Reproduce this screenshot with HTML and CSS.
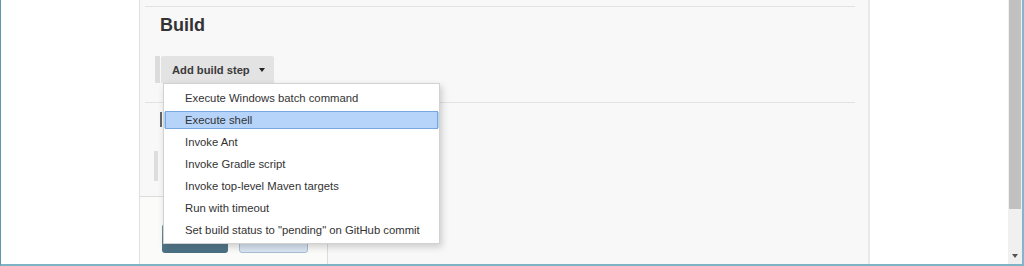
FILE: index.html
```html
<!DOCTYPE html>
<html lang="en">
<head>
  <meta charset="UTF-8">
  <meta name="viewport" content="width=device-width, initial-scale=1.0">
  <title>Build</title>
  <link rel="stylesheet" href="styles.css">
</head>
<body>
  <div class="window">
    <div class="sidebar"></div>
    <main class="panel">
      <div class="rule top-rule"></div>
      <h2 class="section-title">Build</h2>
      <div class="step-row">
        <span class="step-bar"></span>
        <div class="step-wrap">
          <button class="step-button">Add build step <span class="caret"></span></button>
          <ul class="menu">
            <li class="menu-item">Execute Windows batch command</li>
            <li class="menu-item active">Execute shell</li>
            <li class="menu-item">Invoke Ant</li>
            <li class="menu-item">Invoke Gradle script</li>
            <li class="menu-item">Invoke top-level Maven targets</li>
            <li class="menu-item">Run with timeout</li>
            <li class="menu-item">Set build status to "pending" on GitHub commit</li>
          </ul>
        </div>
      </div>
      <div class="rule mid-rule"></div>
      <div class="hidden-field"><span class="field-mark"></span></div>
      <div class="hidden-step"><span class="step-bar"></span></div>
      <div class="footer-box">
        <div class="footer-buttons">
          <span class="btn-save"></span>
          <span class="btn-apply"></span>
        </div>
      </div>
    </main>
    <div class="gutter"></div>
    <div class="scrollbar">
      <div class="thumb"></div>
      <span class="scroll-arrow"></span>
    </div>
  </div>
</body>
</html>
```

FILE: styles.css
```css
html, body {
  margin: 0;
  padding: 0;
  height: 266px;
  overflow: hidden;
  font-family: "Liberation Sans", Arial, sans-serif;
  background: #fff;
}
.window {
  display: flex;
  height: 266px;
  box-sizing: border-box;
  border-left: 1px solid #5f96b2;
  border-right: 2px solid #86b4cd;
  border-bottom: 2px solid #7db3c4;
}
.sidebar {
  width: 138px;
  background: #fff;
}
.panel {
  width: 731px;
  box-sizing: border-box;
  background: #f8f8f8;
  border-left: 1px solid #e0e0e0;
  border-right: 2px solid #e9e9e9;
  display: flex;
  flex-direction: column;
}
.rule {
  margin-left: 5px;
  margin-right: 13px;
  border-bottom: 1px solid #e2e2e2;
}
.top-rule {
  height: 6px;
}
.section-title {
  margin: 7px 0 0 20px;
  font-size: 18px;
  line-height: 22px;
  font-weight: bold;
  color: #333;
}
.step-row {
  display: flex;
  margin: 20px 0 0 15px;
  height: 27px;
}
.step-bar {
  width: 5px;
  background: #dcdcdc;
}
.step-wrap {
  position: relative;
  margin-left: 1px;
}
.step-button {
  height: 27px;
  width: 113px;
  padding: 0 0 0 11px;
  text-align: left;
  border: none;
  border-radius: 2px 2px 0 0;
  background: #e3e3e3;
  font-family: "Liberation Sans", Arial, sans-serif;
  font-size: 11.2px;
  font-weight: bold;
  color: #3a3a3a;
  display: flex;
  align-items: center;
}
.caret {
  margin-left: 9px;
  width: 0;
  height: 0;
  border-left: 3.5px solid transparent;
  border-right: 3.5px solid transparent;
  border-top: 4px solid #222;
}
.menu {
  position: absolute;
  top: 100%;
  left: 2px;
  z-index: 5;
  width: 277px;
  margin: 0;
  padding: 3px 0 2px;
  list-style: none;
  box-sizing: border-box;
  background: #fff;
  border: 1px solid #d2d2d2;
  box-shadow: 2px 3px 7px rgba(0, 0, 0, 0.18);
}
.menu-item {
  height: 22px;
  line-height: 22px;
  padding-left: 21px;
  font-size: 11.3px;
  color: #333;
  position: relative;
}
.menu-item.active {
  background: linear-gradient(#fff 0 3px, #b6d4fa 3px 19px, #fff 19px);
}
.menu-item.active::before {
  content: "";
  position: absolute;
  left: 1px;
  right: 1px;
  top: 2px;
  bottom: 2px;
  border: 1px solid #78a6e0;
}
.mid-rule {
  height: 19px;
}
.hidden-field {
  height: 48px;
  padding-left: 20px;
}
.field-mark {
  display: block;
  margin-top: 9px;
  width: 2px;
  height: 15px;
  background: #666;
}
.hidden-step {
  display: flex;
  height: 30px;
  padding-left: 14px;
}
.hidden-step .step-bar {
  width: 4px;
  background: #dedede;
}
.footer-box {
  margin-top: 15px;
  flex: 1;
  width: 188px;
  box-sizing: border-box;
  background: #fbfcfa;
  border-top: 1px solid #dcdcdc;
  border-right: 1px solid #dcdcdc;
}
.footer-buttons {
  display: flex;
  gap: 11px;
  margin: 27px 0 0 22px;
}
.btn-save {
  width: 66px;
  height: 29px;
  border-radius: 3px;
  background: linear-gradient(#6f95a8, #4a6f82);
}
.btn-apply {
  width: 69px;
  height: 29px;
  box-sizing: border-box;
  border-radius: 3px;
  border: 1px solid #a9bfd6;
  background: #d9e5f2;
}
.gutter {
  flex: 1;
  background: #fff;
}
.scrollbar {
  width: 14px;
  background: #f0f0f0;
  display: flex;
  flex-direction: column;
  align-items: center;
}
.thumb {
  width: 12px;
  height: 209px;
  background: #c1c1c1;
}
.scroll-arrow {
  margin-top: 45px;
  width: 0;
  height: 0;
  border-left: 3px solid transparent;
  border-right: 3px solid transparent;
  border-top: 4px solid #555;
}
```
